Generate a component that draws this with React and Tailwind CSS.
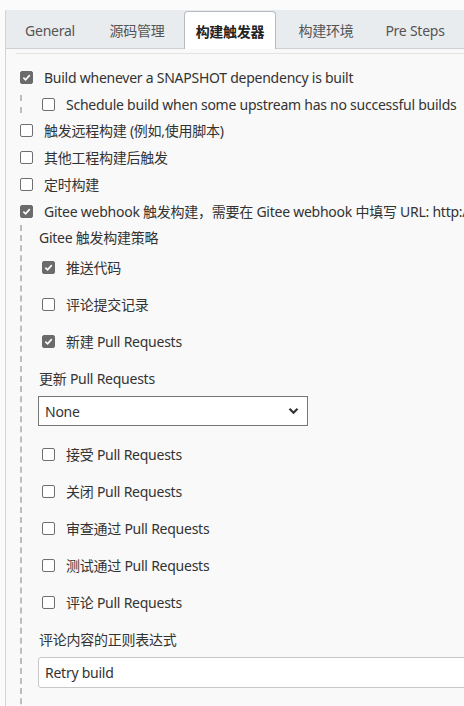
import { useState } from "react";

const font = { fontFamily: '"Noto Sans", "Noto Sans CJK SC", sans-serif' };

function Box({ checked, onClick }) {
  return (
    <span
      onClick={onClick}
      className={
        "flex h-[13px] w-[13px] shrink-0 items-center justify-center rounded-[2px] border " +
        (checked ? "border-[#6b6b6b] bg-[#6b6b6b]" : "border-[#6f6f6f] bg-white")
      }
    >
      {checked && (
        <svg width="9" height="9" viewBox="0 0 10 10">
          <path d="M1.5 5.2 L4 7.6 L8.6 2.4" fill="none" stroke="white" strokeWidth="1.8" />
        </svg>
      )}
    </span>
  );
}

function Check({ label, checked, h = "h-[27px]", gap = "gap-[11px]", toggle }) {
  return (
    <div className={"flex items-center whitespace-nowrap " + h + " " + gap}>
      <Box checked={checked} onClick={toggle} />
      <span>{label}</span>
    </div>
  );
}

const tabs = [
  { name: "General", w: "w-[80px]" },
  { name: "源码管理", w: "w-[94px]" },
  { name: "构建触发器", w: "w-[92px]", active: true },
  { name: "构建环境", w: "w-[100px]" },
  { name: "Pre Steps", w: "w-[78px]" },
];

export default function App() {
  const [state, setState] = useState({
    snapshot: true,
    schedule: false,
    remote: false,
    other: false,
    timer: false,
    gitee: true,
    push: true,
    comment: false,
    newPr: true,
    accept: false,
    close: false,
    review: false,
    test: false,
    commentPr: false,
  });
  const t = (k) => () => setState((s) => ({ ...s, [k]: !s[k] }));

  return (
    <div className="h-[706px] w-[464px] overflow-hidden bg-[#fbfbfb] pt-[10px] pl-[5px] text-[14px] tracking-[-0.25px] text-[#333]" style={font}>
      <div className="h-full border-l border-[#d4d4d4] bg-[#f9f9f9]">
        {/* tabs */}
        <div className="flex h-[39px] items-end border-b border-[#cdd1d5] bg-[#e9ecef] pl-[4px]">
          {tabs.map((tab) =>
            tab.active ? (
              <div
                key={tab.name}
                className={"-mb-px flex h-[38px] items-center justify-center rounded-t-[4px] border border-b-0 border-[#b4bac0] bg-white pt-[2px] font-semibold text-[#222] " + tab.w}
              >
                {tab.name}
              </div>
            ) : (
              <div key={tab.name} className={"flex h-[37px] items-center justify-center pt-[2px] text-[#555] " + tab.w}>
                {tab.name}
              </div>
            )
          )}
        </div>
        <div className="ml-[10px] mt-[4px] border-t border-[#e3e3e3]" />

        <div className="pl-[14px] pt-[10px]">
          <Check label="Build whenever a SNAPSHOT dependency is built" checked={state.snapshot} toggle={t("snapshot")} />
          <div className="my-[4px] h-[18px] border-l-2 border-dashed border-[#bdbdbd] pl-[20px]">
            <Check h="h-[18px]" label="Schedule build when some upstream has no successful builds" checked={state.schedule} toggle={t("schedule")} />
          </div>
          <Check label="触发远程构建 (例如,使用脚本)" checked={state.remote} toggle={t("remote")} />
          <Check label="其他工程构建后触发" checked={state.other} toggle={t("other")} />
          <Check label="定时构建" checked={state.timer} toggle={t("timer")} />
          <Check label="Gitee webhook 触发构建，需要在 Gitee webhook 中填写 URL: http://jenkins.example.com/gitee-project/demo" checked={state.gitee} toggle={t("gitee")} />

          <div className="h-[600px] border-l-2 border-dashed border-[#bdbdbd]">
            <div className="flex h-[24px] items-center pl-[17px]">Gitee 触发构建策略</div>
            <div className="pl-[20px]">
              <Check h="h-[37px]" label="推送代码" checked={state.push} toggle={t("push")} />
              <Check h="h-[37px]" label="评论提交记录" checked={state.comment} toggle={t("comment")} />
              <Check h="h-[37px]" label="新建 Pull Requests" checked={state.newPr} toggle={t("newPr")} />
            </div>
            <div className="flex h-[36px] items-center pl-[17px]">更新 Pull Requests</div>
            <div className="pl-[16px]">
              <div className="flex h-[30px] w-[270px] items-center justify-between border border-[#767676] bg-white pl-[6px] pr-[8px]">
                <span>None</span>
                <svg width="11" height="8" viewBox="0 0 11 8">
                  <path d="M1.5 1.8 L5.5 5.8 L9.5 1.8" fill="none" stroke="#333" strokeWidth="2.2" />
                </svg>
              </div>
            </div>
            <div className="mt-[10px] pl-[20px]">
              <Check h="h-[37px]" label="接受 Pull Requests" checked={state.accept} toggle={t("accept")} />
              <Check h="h-[37px]" label="关闭 Pull Requests" checked={state.close} toggle={t("close")} />
              <Check h="h-[37px]" label="审查通过 Pull Requests" checked={state.review} toggle={t("review")} />
              <Check h="h-[37px]" label="测试通过 Pull Requests" checked={state.test} toggle={t("test")} />
              <Check h="h-[37px]" label="评论 Pull Requests" checked={state.commentPr} toggle={t("commentPr")} />
            </div>
            <div className="flex h-[36px] items-center pl-[17px]">评论内容的正则表达式</div>
            <div className="pl-[16px]">
              <input
                defaultValue="Retry build"
                className="h-[31px] w-[440px] rounded-[3px] border border-[#c8c8c8] bg-white px-[6px] text-[14px] tracking-[-0.25px] text-[#333] outline-none"
                style={font}
              />
            </div>
          </div>
        </div>
      </div>
    </div>
  );
}
